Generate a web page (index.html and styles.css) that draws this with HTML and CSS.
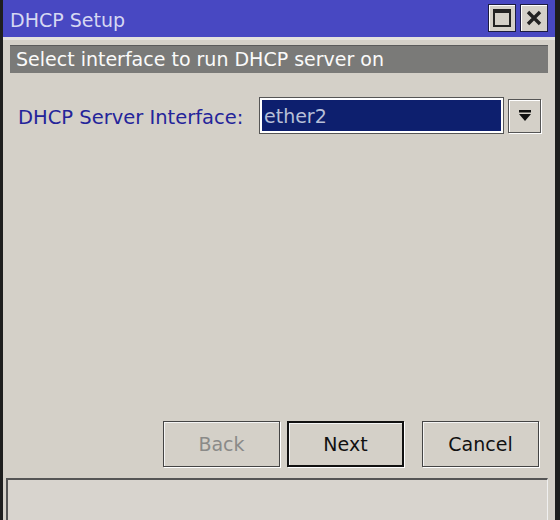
FILE: index.html
```html
<!DOCTYPE html>
<html>
<head>
<meta charset="utf-8">
<link rel="stylesheet" href="styles.css">
</head>
<body>
<div class="window">
  <div class="titlebar">
    <span class="title">DHCP Setup</span>
    <div class="tbtns">
      <div class="tbtn"><svg width="20" height="20" viewBox="0 0 20 20"><rect x="2" y="2" width="16" height="16" fill="none" stroke="#222" stroke-width="2"/><rect x="2" y="2" width="16" height="3" fill="#222"/></svg></div>
      <div class="tbtn"><svg width="20" height="20" viewBox="0 0 20 20"><path d="M4 4 L16 16 M16 4 L4 16" stroke="#222" stroke-width="3.4"/></svg></div>
    </div>
  </div>
  <div class="body">
    <div class="header">Select interface to run DHCP server on</div>
    <div class="row">
      <span class="label">DHCP Server Interface:</span>
      <div class="combo"><span>ether2</span></div>
      <div class="drop"><svg width="16" height="16" viewBox="0 0 16 16"><rect x="2" y="2" width="12" height="2.5" fill="#111"/><path d="M2 6 H14 L8 13 Z" fill="#111"/></svg></div>
    </div>
    <div class="spacer"></div>
    <div class="buttons">
      <div class="btn disabled">Back</div>
      <div class="btn default">Next</div>
      <div class="btn cancel">Cancel</div>
    </div>
    <div class="status"></div>
  </div>
</div>
</body>
</html>
```
FILE: styles.css
```css
html, body {
  margin: 0;
  padding: 0;
  background: #1e1e1e;
  height: 520px;
  overflow: hidden;
}
.window {
  margin-left: 3px;
  width: 552px;
  height: 520px;
  background: #d4d0c8;
  display: flex;
  flex-direction: column;
  font-family: "DejaVu Sans", sans-serif;
}
.titlebar {
  height: 37px;
  background: #4848c2;
  display: flex;
  align-items: center;
  justify-content: space-between;
  border-bottom: 3px solid #e4e2de;
}
.title {
  color: #d6d8f2;
  font-size: 19px;
  margin-left: 7px;
  margin-top: 2px;
}
.tbtns {
  display: flex;
  gap: 4px;
  margin-right: 7px;
  margin-top: -2px;
}
.tbtn {
  width: 26px;
  height: 26px;
  background: #d4d0c8;
  border: 1px solid #1c1c40;
  box-shadow: inset 1px 1px 0 #fff;
  display: flex;
  align-items: center;
  justify-content: center;
}
.body {
  flex: 1;
  display: flex;
  flex-direction: column;
  padding: 5px 7px 0 3px;
}
.header {
  background: #7a7a78;
  color: #fafafa;
  font-size: 19px;
  height: 27px;
  line-height: 27px;
  padding-left: 6px;
  margin: 0 0 0 4px;
  border-top: 1px solid #5a5a5a;
}
.row {
  display: flex;
  align-items: center;
  margin-top: 25px;
  padding-left: 12px;
}
.label {
  color: #24249a;
  font-size: 19.5px;
  width: 242px;
  margin-top: 3px;
}
.combo {
  width: 237px;
  height: 31px;
  border: 2px solid #fff;
  outline: 1px solid #555;
  background: #0d1f6e;
  color: #b8c0d8;
  font-size: 19px;
  display: flex;
  align-items: center;
  padding-left: 2px;
}
.drop {
  margin-left: 5px;
  width: 31px;
  height: 32px;
  border: 1px solid #555;
  box-shadow: inset 1px 1px 0 #fff, 1px 1px 0 #fff;
  display: flex;
  align-items: center;
  justify-content: center;
}
.spacer { flex: 1; }
.buttons {
  display: flex;
  justify-content: flex-end;
  gap: 7px;
  padding-right: 9px;
  margin-bottom: 11px;
}
.btn {
  width: 115px;
  height: 44px;
  border: 1px solid #444;
  box-shadow: 1px 1px 0 #fff, inset 1px 1px 0 #f4f4f4;
  display: flex;
  align-items: center;
  justify-content: center;
  font-size: 19px;
  color: #111;
}
.btn.disabled { color: #8a8a88; }
.btn.default { border: 2px solid #111; width: 113px; height: 42px; }
.btn.cancel { margin-left: 11px; }
.status {
  height: 40px;
  border-top: 2px solid #555;
  border-left: 2px solid #555;
  border-right: 1px solid #f0f0f0;
  background: #d8d4ce;
}
```
